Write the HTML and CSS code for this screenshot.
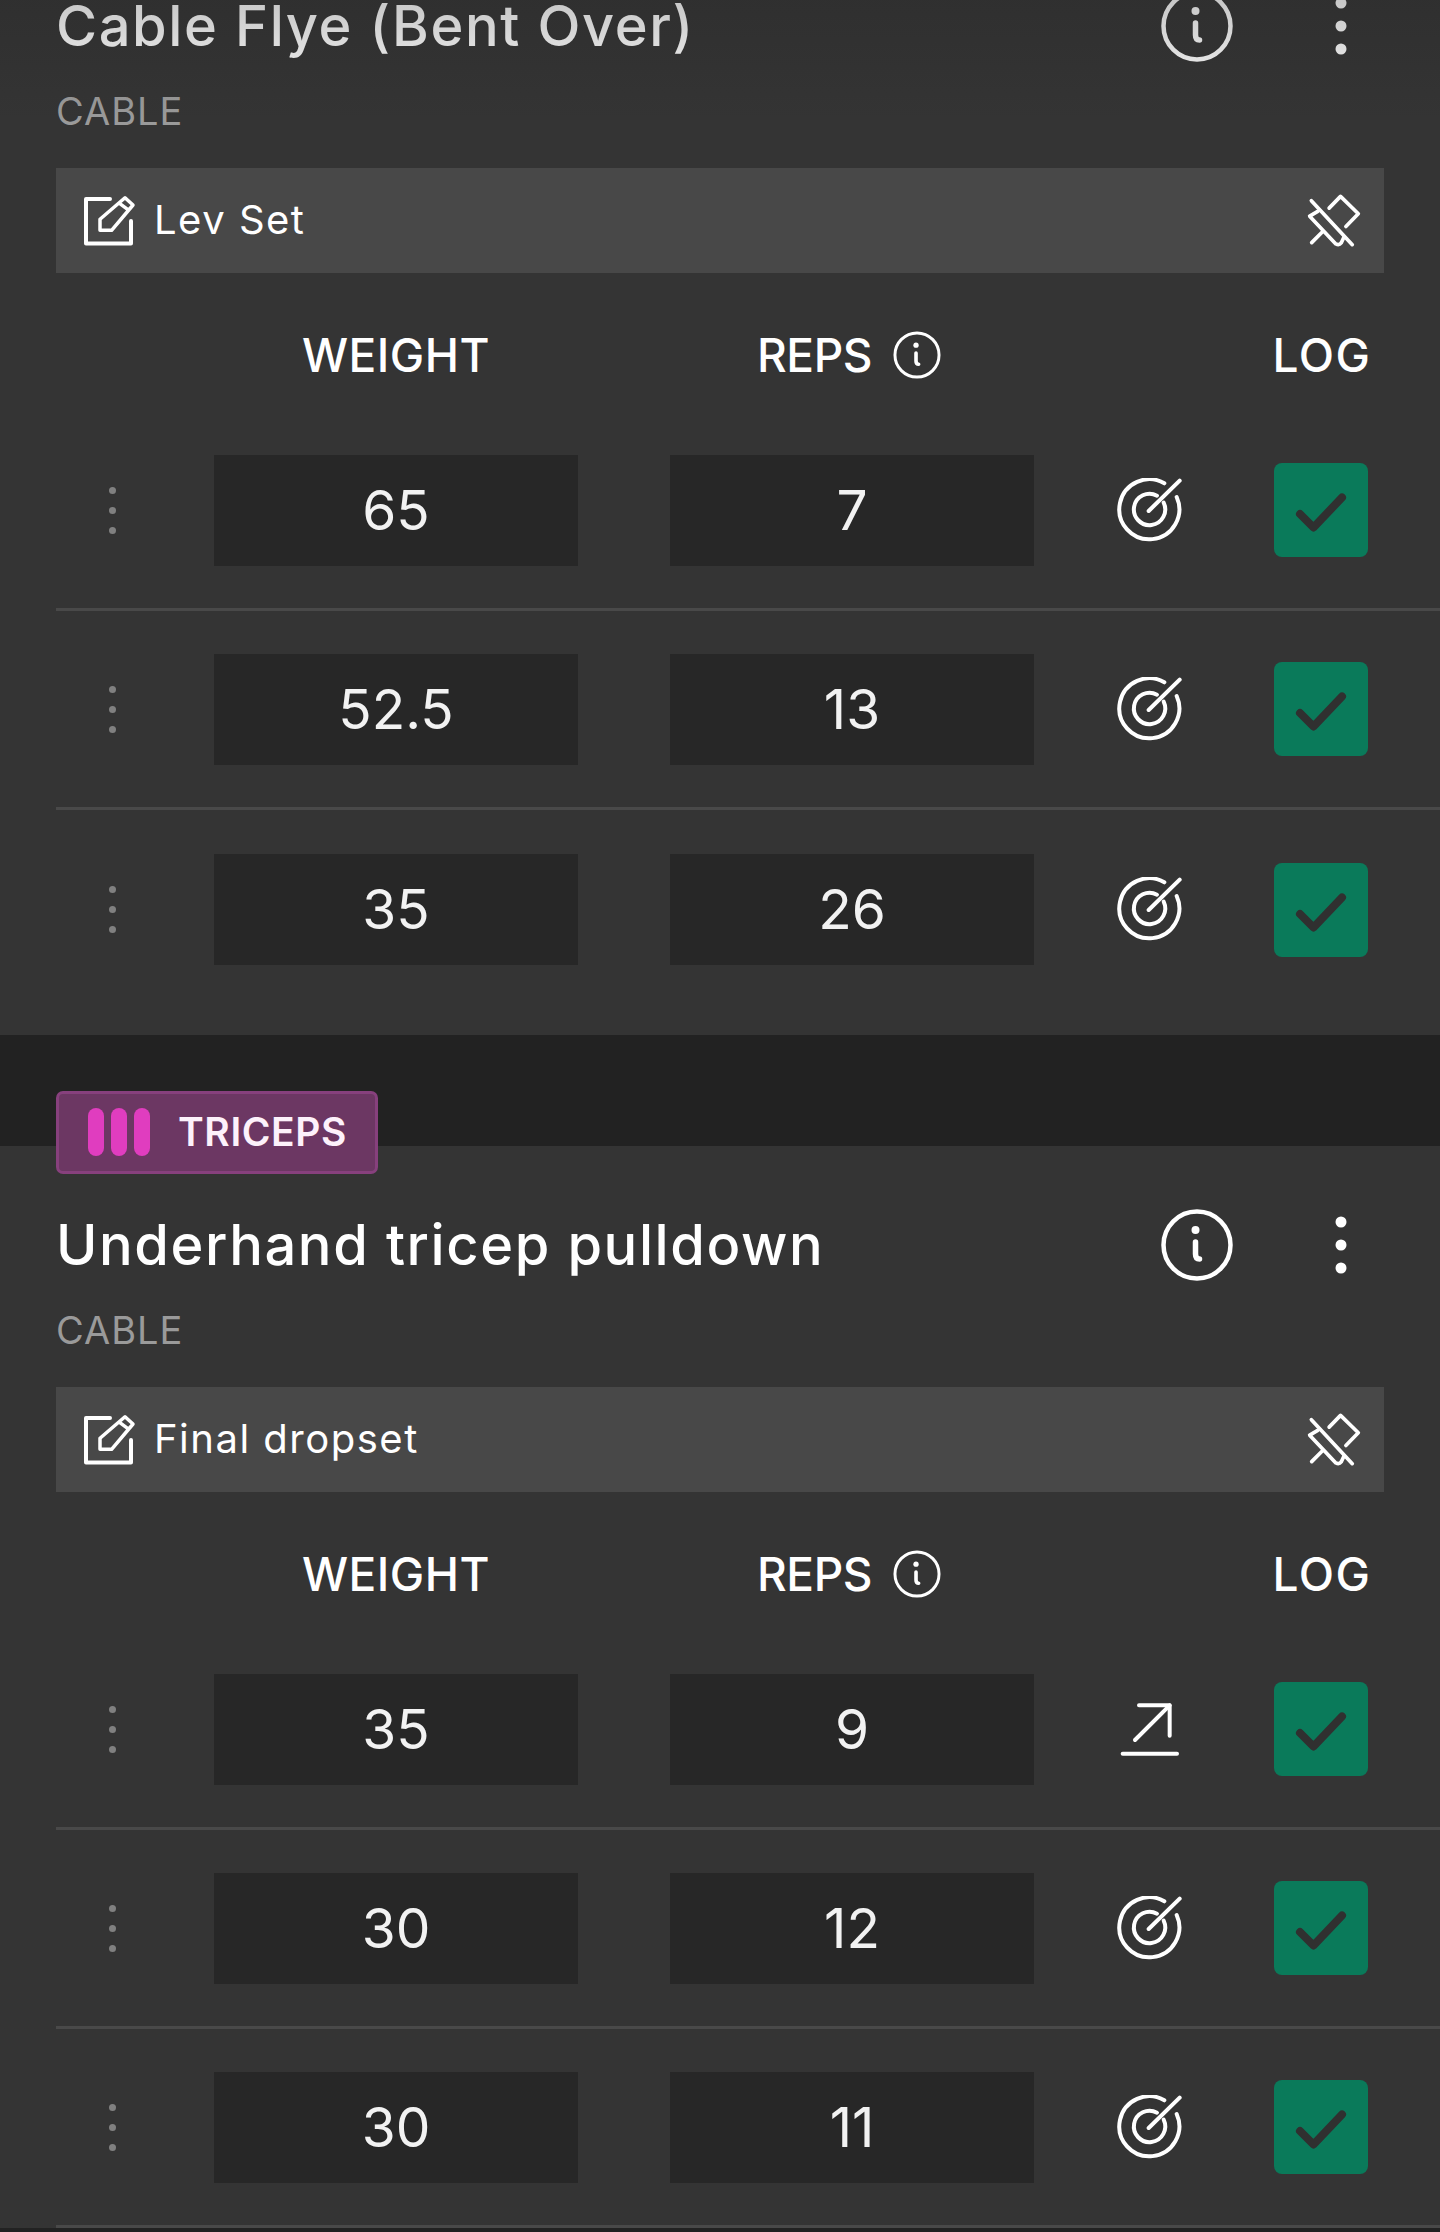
FILE: index.html
```html
<!DOCTYPE html>
<html lang="en">
<head>
    <meta charset="UTF-8">
    <title>Workout</title>
    <link rel="stylesheet" href="styles.css">
</head>
<body>
    <svg class="icon-defs" width="0" height="0">
        <symbol id="i-info" viewBox="0 0 76 76">
            <circle cx="38" cy="38" r="33.500" fill="none" stroke="currentColor" stroke-width="4.500"/>
            <circle cx="36.500" cy="23" r="4" fill="currentColor"/>
            <path d="M36.500 35 V47 Q36.500 52 40.500 52" fill="none" stroke="currentColor" stroke-width="5.500" stroke-linecap="round"/>
        </symbol>
        <symbol id="i-more" viewBox="0 0 20 60">
            <circle cx="10" cy="7" r="5.500" fill="currentColor"/>
            <circle cx="10" cy="30" r="5.500" fill="currentColor"/>
            <circle cx="10" cy="53" r="5.500" fill="currentColor"/>
        </symbol>
        <symbol id="i-edit" viewBox="0 0 56 52">
            <path d="M30 4 H6 V48.500 H51 V26" fill="none" stroke="currentColor" stroke-width="4" stroke-linejoin="round" stroke-linecap="round"/>
            <path d="M20 35.300 V24.300 L45 2.700 L53 10 L31.600 35.300 Z M38.500 7.700 L47.600 14.300" fill="none" stroke="currentColor" stroke-width="3.500" stroke-linejoin="round"/>
        </symbol>
        <symbol id="i-unpin" viewBox="680 570 170 170">
            <g fill="none" stroke="currentColor" stroke-width="11" stroke-linecap="round" stroke-linejoin="round">
                <path d="M693 596 L815 727"/>
                <path d="M746 618 L780 583 L833 635 L796 673"/>
                <path d="M712 628 L688 642 L766 725 Q776 730 782 722 L790 705"/>
                <path d="M694 721 L727 688"/>
            </g>
        </symbol>
        <symbol id="i-target" viewBox="110 475 195 195">
            <g fill="none" stroke="currentColor" stroke-width="12" stroke-linecap="round">
                <path d="M252 491 A90 90 0 1 0 289 532"/>
                <path d="M230 528 A47 47 0 1 0 250 549"/>
                <path d="M205 574 L298 483"/>
            </g>
        </symbol>
        <symbol id="i-up" viewBox="110 190 195 175">
            <g fill="none" stroke="currentColor" stroke-width="12" stroke-linecap="round" stroke-linejoin="round">
                <path d="M176 205 H268 V296"/>
                <path d="M164 309 L268 205"/>
                <path d="M127 350 H290"/>
            </g>
        </symbol>
        <symbol id="i-check" viewBox="0 0 94 94">
            <path d="M26 51 L39.500 64.500 L68 34.500" fill="none" stroke="currentColor" stroke-width="8" stroke-linecap="round" stroke-linejoin="round"/>
        </symbol>
    </svg>

    <main class="page">
        <section class="card card-first">
            <div class="card-head">
                <h2 class="title">Cable Flye (Bent Over)</h2>
                <div class="head-actions">
                    <svg class="ic-info"><use href="#i-info"/></svg>
                    <svg class="ic-more"><use href="#i-more"/></svg>
                </div>
            </div>
            <div class="equipment">CABLE</div>
            <div class="note">
                <svg class="ic-edit"><use href="#i-edit"/></svg>
                <span class="note-text">Lev Set</span>
                <svg class="ic-unpin"><use href="#i-unpin"/></svg>
            </div>
            <div class="grid sets-head">
                <div class="col-weight">WEIGHT</div>
                <div class="col-reps"><span>REPS</span> <svg class="ic-reps"><use href="#i-info"/></svg></div>
                <div class="col-log">LOG</div>
            </div>
            <div class="grid set-row">
                <div class="drag"><i></i><i></i><i></i></div>
                <div class="field col-weight">65</div>
                <div class="field col-reps">7</div>
                <svg class="ic-type"><use href="#i-target"/></svg>
                <div class="check col-log"><svg><use href="#i-check"/></svg></div>
            </div>
            <div class="grid set-row">
                <div class="drag"><i></i><i></i><i></i></div>
                <div class="field col-weight">52.5</div>
                <div class="field col-reps">13</div>
                <svg class="ic-type"><use href="#i-target"/></svg>
                <div class="check col-log"><svg><use href="#i-check"/></svg></div>
            </div>
            <div class="grid set-row">
                <div class="drag"><i></i><i></i><i></i></div>
                <div class="field col-weight">35</div>
                <div class="field col-reps">26</div>
                <svg class="ic-type"><use href="#i-target"/></svg>
                <div class="check col-log"><svg><use href="#i-check"/></svg></div>
            </div>
        </section>

        <section class="card">
            <div class="muscle-tag">
                <span class="bars"><i></i><i></i><i></i></span>
                TRICEPS
            </div>
            <div class="card-head">
                <h2 class="title">Underhand tricep pulldown</h2>
                <div class="head-actions">
                    <svg class="ic-info"><use href="#i-info"/></svg>
                    <svg class="ic-more"><use href="#i-more"/></svg>
                </div>
            </div>
            <div class="equipment">CABLE</div>
            <div class="note">
                <svg class="ic-edit"><use href="#i-edit"/></svg>
                <span class="note-text">Final dropset</span>
                <svg class="ic-unpin"><use href="#i-unpin"/></svg>
            </div>
            <div class="grid sets-head">
                <div class="col-weight">WEIGHT</div>
                <div class="col-reps"><span>REPS</span> <svg class="ic-reps"><use href="#i-info"/></svg></div>
                <div class="col-log">LOG</div>
            </div>
            <div class="grid set-row">
                <div class="drag"><i></i><i></i><i></i></div>
                <div class="field col-weight">35</div>
                <div class="field col-reps">9</div>
                <svg class="ic-type"><use href="#i-up"/></svg>
                <div class="check col-log"><svg><use href="#i-check"/></svg></div>
            </div>
            <div class="grid set-row">
                <div class="drag"><i></i><i></i><i></i></div>
                <div class="field col-weight">30</div>
                <div class="field col-reps">12</div>
                <svg class="ic-type"><use href="#i-target"/></svg>
                <div class="check col-log"><svg><use href="#i-check"/></svg></div>
            </div>
            <div class="grid set-row">
                <div class="drag"><i></i><i></i><i></i></div>
                <div class="field col-weight">30</div>
                <div class="field col-reps">11</div>
                <svg class="ic-type"><use href="#i-target"/></svg>
                <div class="check col-log"><svg><use href="#i-check"/></svg></div>
            </div>
        </section>
    </main>
    <div class="scroll-fade"></div>
</body>
</html>
```

FILE: styles.css
```css
:root {
    --page-bg: #222222; --card-bg: #343434; --field-bg: #272727; --note-bg: #484848;
    --line: #494949; --green: #0a7a5a; --muted: #9a9a9a;
}
* { box-sizing: border-box; margin: 0; padding: 0; }
html, body { height: 2232px; overflow: hidden; }
body { background-color: var(--page-bg); color: #fff; font-family: 'Inter', 'Open Sans', sans-serif; position: relative; }
.icon-defs { position: absolute; }
svg { display: block; }
.page { margin-top: -73px; display: flex; flex-direction: column; gap: 111px; }
.card { background-color: var(--card-bg); padding: 64px 0 0 56px; position: relative; }
.card-first { padding-bottom: 26px; }
.card-first .set-row:last-child { border-bottom: 0; }

.muscle-tag {
    position: absolute; left: 56px; top: -55px; width: 322px; height: 83px;
    display: flex; align-items: center; gap: 28px; padding: 0 0 2px 29px;
    background-color: #6c3763; border: 3px solid #87407d; border-radius: 7px;
    color: #fdf1fb; font-size: 39px; font-weight: 600; letter-spacing: 0.6px;
}
.bars { display: flex; gap: 7px; }
.bars i { display: block; width: 16px; height: 48px; border-radius: 8px; background-color: #e03dbf; }

.card-head { display: flex; align-items: center; justify-content: space-between; height: 70px; padding-right: 89px; }
.title { font-size: 56px; font-weight: 500; line-height: 66px; letter-spacing: 1.6px; }
.head-actions { display: flex; align-items: center; gap: 96px; }
.ic-info { width: 76px; height: 76px; color: #fff; }
.ic-more { width: 20px; height: 60px; color: #fff; }
.equipment { margin-top: 20px; line-height: 60px; font-size: 38px; letter-spacing: 1px; color: var(--muted); }

.note {
    display: flex; align-items: center; height: 105px; margin: 27px 56px 0 0; padding: 0 20px 0 24px;
    background-color: var(--note-bg);
}
.ic-edit { width: 56px; height: 52px; color: #fff; margin-right: 18px; }
.note-text { flex: 1; font-size: 40px; letter-spacing: 1.5px; margin-top: -3px; }
.ic-unpin { width: 57px; height: 57px; color: #fff; }

.grid { display: grid; grid-template-columns: 158px 364px 92px 364px 230px 114px; align-items: center; }
.col-weight { grid-column: 2; }
.col-reps { grid-column: 4; }
.col-log { grid-column: 6; }
.sets-head { margin-top: 25px; height: 114px; font-size: 46px; font-weight: 500; text-align: center; letter-spacing: 0.5px; }
.sets-head .col-reps { display: flex; align-items: center; justify-content: center; gap: 20px; letter-spacing: -0.4px; padding-right: 5px; }
.sets-head .col-log { letter-spacing: 1.5px; padding-left: 2px; }
.ic-reps { width: 50px; height: 50px; }

.set-row { height: 199px; border-bottom: 3px solid var(--line); }
.drag { display: flex; flex-direction: column; align-items: center; gap: 13px; padding-right: 46px; }
.drag i { display: block; width: 7px; height: 7px; border-radius: 50%; background-color: #808080; }
.field { height: 111px; line-height: 110px; background-color: var(--field-bg); font-size: 55px; text-align: center; color: #f2f2f2; }
.ic-type { grid-column: 5; justify-self: center; width: 65px; height: 65px; color: #fff; }
.check { justify-self: center; width: 94px; height: 94px; border-radius: 8px; background-color: var(--green); color: #303030; }
.check svg { width: 94px; height: 94px; }

.scroll-fade {
    position: absolute; left: 0; top: 0; width: 100%; height: 120px;
    background: linear-gradient(to bottom, rgba(34, 34, 34, 0.25), rgba(34, 34, 34, 0));
}
```
